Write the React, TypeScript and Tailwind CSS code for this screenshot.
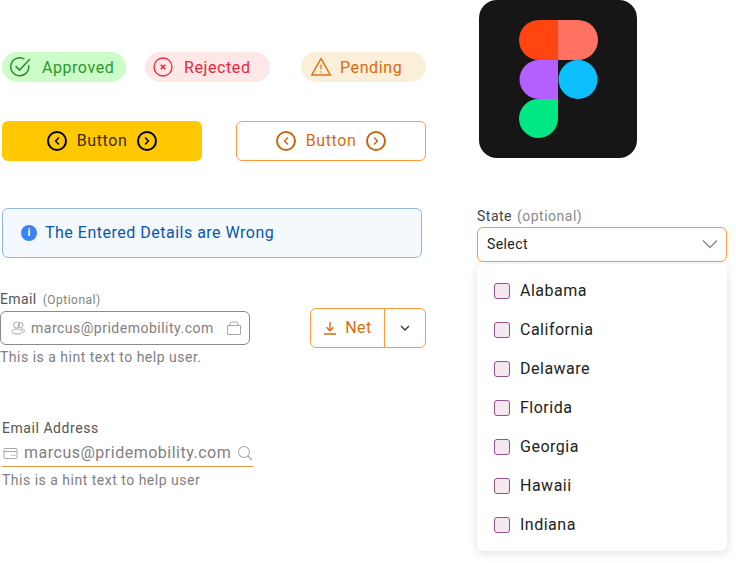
import React from 'react'
import { ChevronLeft, ChevronRight } from 'lucide-react'

const states = ['Alabama', 'California', 'Delaware', 'Florida', 'Georgia', 'Hawaii', 'Indiana']

const CircleChevron = ({ right, color }: { right?: boolean; color: string }) => {
  const Icon = right ? ChevronRight : ChevronLeft
  return (
    <span className={`w-5 h-5 rounded-full border-2 flex items-center justify-center ${color}`}>
      <Icon className="w-3 h-3" strokeWidth={3} />
    </span>
  )
}

const App = () => {
  return (
    <div className="w-[736px] h-[563px] bg-white flex overflow-hidden font-['Roboto',sans-serif]">
      {/* Left column */}
      <div className="w-[477px] shrink-0 pt-[52px]">
        {/* Badges */}
        <div className="flex pl-[2px] h-[30px]">
          <div className="w-[124px] h-[30px] rounded-full bg-[#ccfcc8] flex items-center pl-[7px] text-[#2a9a2a] text-base tracking-[0.55px]">
            <svg width="22" height="22" viewBox="0 0 22 22" fill="none" stroke="#2a8a2e" strokeWidth="1.5">
              <path d="M19.6 9.2A9 9 0 1 1 15.5 3.2" />
              <path d="M7 10.5l3.6 3.6L20.5 3.6" strokeLinecap="round" strokeLinejoin="round" />
            </svg>
            <span className="ml-[11px] pt-[2px]">Approved</span>
          </div>
          <div className="ml-[19px] w-[125px] h-[30px] rounded-full bg-[#fde7e7] flex items-center pl-[8px] text-[#e8273c] text-base tracking-[0.6px]">
            <svg width="20" height="20" viewBox="0 0 20 20" fill="none" stroke="#e8273c" strokeWidth="1.3">
              <circle cx="10" cy="10" r="9" />
              <path d="M7.8 7.8l4.400 4.400M12.200 7.800l-4.400 4.400" strokeWidth="1.6" />
            </svg>
            <span className="ml-[11px] pt-[2px]">Rejected</span>
          </div>
          <div className="ml-[31px] w-[125px] h-[30px] rounded-full bg-[#fcefd9] flex items-center pl-[10px] text-[#d96c0a] text-base tracking-[0.6px]">
            <svg width="20" height="20" viewBox="0 0 20 20" fill="none" stroke="#e06f0c" strokeWidth="1.5" strokeLinejoin="round">
              <path d="M10 1.500L19.300 18H.7z" />
              <path d="M10 7.500v5M10 14.200v1.300" strokeWidth="1.2" />
            </svg>
            <span className="ml-[9px] pt-[2px]">Pending</span>
          </div>
        </div>

        {/* Buttons */}
        <div className="flex pl-[2px] mt-[39px]">
          <button className="w-[200px] h-10 rounded-md bg-[#ffc800] flex items-center justify-center gap-[10px] text-base text-[#3a2c00] tracking-[0.6px]">
            <CircleChevron color="border-black text-black" />
            Button
            <CircleChevron right color="border-black text-black" />
          </button>
          <button className="ml-[34px] w-[190px] h-10 rounded-md border border-[#ff9a3c] flex items-center justify-center gap-[10px] text-base text-[#d96c0a] tracking-[0.6px]">
            <CircleChevron color="border-[#c4660f] text-[#c4660f]" />
            Button
            <CircleChevron right color="border-[#c4660f] text-[#c4660f]" />
          </button>
        </div>

        {/* Alert */}
        <div className="ml-[2px] mt-[47px] w-[420px] h-[50px] rounded-md border border-[#8fb6e3] bg-[#f4f9fe] flex items-center pl-[18px] text-[#0a56ad] text-base tracking-[0.5px]">
          <span className="w-4 h-4 rounded-full bg-[#3b82f6] text-white flex items-center justify-center text-[11px] font-bold tracking-normal">i</span>
          <span className="ml-[8px]">The Entered Details are Wrong</span>
        </div>

        {/* Email + split button */}
        <div className="flex mt-[33px]">
          <div className="w-[250px]">
            <div className="h-4 flex items-baseline text-sm text-[#555] tracking-[0.4px] leading-4">
              Email
              <span className="ml-[6px] text-xs text-[#808080] tracking-[0.5px]">(Optional)</span>
            </div>
            <div className="mt-[4px] h-[34px] rounded-md border border-[#8a8a8a] flex items-center pl-[9px] pr-[7px] text-[#808080] text-sm tracking-[0.5px]">
              <svg width="16" height="16" viewBox="0 0 16 16" fill="none" stroke="#a8a8a8" strokeWidth="1" className="shrink-0">
                <circle cx="6.500" cy="5" r="3" />
                <circle cx="10.500" cy="5" r="2.500" />
                <ellipse cx="7" cy="11.500" rx="5" ry="2.500" />
                <path d="M11.500 8.700c2 .3 3 1.200 3 2.300 0 .8-.6 1.400-1.700 1.800" />
              </svg>
              <span className="ml-[5px] flex-1">marcus@pridemobility.com</span>
              <svg width="16" height="16" viewBox="0 0 16 16" fill="none" stroke="#a8a8a8" strokeWidth="1" className="shrink-0">
                <path d="M1.500 5.500h13v9h-13zM3.500 5.500L5 2h6l1.500 3.500" strokeLinejoin="round" />
              </svg>
            </div>
            <div className="mt-[4px] text-sm leading-4 text-[#808080] tracking-[0.5px]">This is a hint text to help user.</div>
          </div>
          <div className="ml-[60px] mt-[17px] w-[116px] h-10 rounded-md border border-[#ff9a3c] flex">
            <div className="w-[74px] flex items-center justify-center gap-2 text-[#d96c0a] text-base tracking-[0.5px] border-r border-[#ff9a3c]">
              <svg width="14" height="14" viewBox="0 0 14 14" fill="none" stroke="#d96c0a" strokeWidth="1.4">
                <path d="M7 1v8.500M3.500 6.200L7 9.700l3.500-3.500M1 13h12" />
              </svg>
              Net
            </div>
            <div className="flex-1 flex items-center justify-center">
              <svg width="12" height="8" viewBox="0 0 12 8" fill="none" stroke="#333" strokeWidth="1.3">
                <path d="M2 2l4 4 4-4" />
              </svg>
            </div>
          </div>
        </div>

        {/* Email address */}
        <div className="ml-[2px] mt-[55px] w-[251px]">
          <div className="text-sm leading-4 text-[#555] tracking-[0.55px]">Email Address</div>
          <div className="mt-[4px] h-[27px] border-b border-[#e8963f] flex items-center text-[#808080] text-base tracking-[0.5px]">
            <svg width="15" height="15" viewBox="0 0 15 15" fill="none" stroke="#a8a8a8" strokeWidth="1" className="ml-[1px] shrink-0">
              <rect x="1" y="2.500" width="13" height="10" rx="1" />
              <path d="M1 5.500h13M8 9.500h1.500M11 9.500h1.500" />
            </svg>
            <span className="ml-[6px] flex-1">marcus@pridemobility.com</span>
            <svg width="16" height="16" viewBox="0 0 16 16" fill="none" stroke="#a8a8a8" strokeWidth="1.1" className="shrink-0">
              <circle cx="7" cy="7" r="5.500" />
              <path d="M11 11l4 4" />
            </svg>
          </div>
          <div className="mt-[5px] text-sm leading-4 text-[#808080] tracking-[0.5px]">This is a hint text to help user</div>
        </div>
      </div>

      {/* Right column */}
      <div className="w-[250px] shrink-0">
        <div className="ml-[2px] w-[158px] h-[158px] rounded-[18px] bg-[#161616] flex items-center justify-center">
          <svg width="79" height="118" viewBox="0 0 79 118">
            <path d="M39 0H20a20 20 0 0 0 0 40h19z" fill="#ff4510" />
            <path d="M39 0h20a20 20 0 0 1 0 40H39z" fill="#ff7262" />
            <path d="M39 40H20a19.500 19.500 0 0 0 0 39h19z" fill="#b45fff" />
            <circle cx="59" cy="59.500" r="19.500" fill="#0ebfff" />
            <path d="M39 79H20a19.500 19.500 0 1 0 19 19.500z" fill="#00e884" />
          </svg>
        </div>

        <div className="mt-[50px] h-4 text-sm leading-4 text-[#444] tracking-[0.5px]">
          State <span className="ml-[1px] text-[#8a8a8a]">(optional)</span>
        </div>
        <div className="mt-[3px] h-[35px] rounded-md border border-[#ff9a3c] flex items-center pl-[9px] pr-[8px] pb-[1px] text-sm text-[#222] tracking-[0.4px]">
          <span className="flex-1">Select</span>
          <svg width="16" height="10" viewBox="0 0 16 10" fill="none" stroke="#888" strokeWidth="1.3">
            <path d="M1 1.500l7 7 7-7" />
          </svg>
        </div>

        {/* Dropdown */}
        <div className="mt-[2px] h-[287px] rounded-md bg-white shadow-[0_2px_10px_rgba(0,0,0,0.13)] pt-[7px]">
          {states.map((state) => (
            <div key={state} className="h-[39px] flex items-center pl-[17px] text-base text-[#222] tracking-[0.5px]">
              <span className="w-4 h-4 rounded-[3px] border border-[#94508a] bg-[#f5e9f0] shrink-0" />
              <span className="ml-[10px]">{state}</span>
            </div>
          ))}
        </div>
      </div>
    </div>
  )
}

export default App
